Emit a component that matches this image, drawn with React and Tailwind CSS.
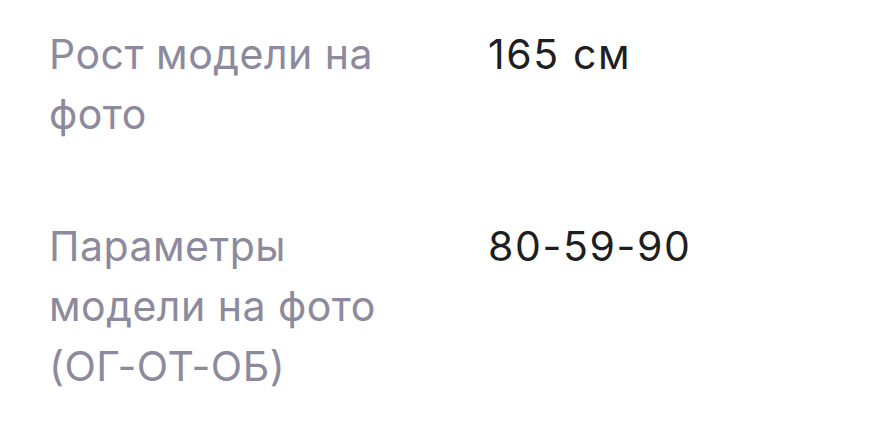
export default function App() {
  const rows = [
    { label: "Рост модели на фото", value: "165 см" },
    { label: "Параметры модели на фото (ОГ-ОТ-ОБ)", value: "80-59-90" },
  ];
  return (
    <div
      className="w-[873px] h-[442px] bg-white pl-[49px] pt-[24px]"
      style={{ fontFamily: "Inter, 'Noto Sans', sans-serif" }}
    >
      <div className="flex flex-col gap-[72px]">
        {rows.map((r) => (
          <div key={r.label} className="grid grid-cols-[340px_1fr] gap-x-[99px]">
            <div className="text-[41px] leading-[60px] tracking-[0.5px] text-[#8c8a9c]">{r.label}</div>
            <div className="text-[41px] leading-[60px] tracking-[1.6px] text-[#1f1f22]">{r.value}</div>
          </div>
        ))}
      </div>
    </div>
  );
}
